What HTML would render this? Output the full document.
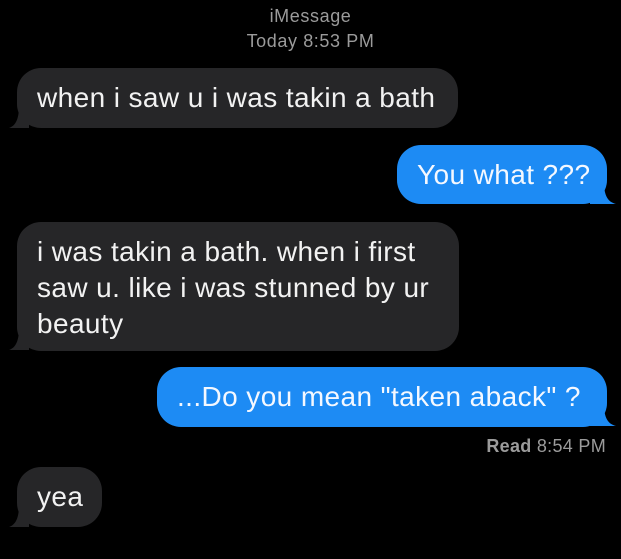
<!DOCTYPE html>
<html><head><style>
body{margin:0;width:621px;height:559px;background:#000;position:relative;overflow:hidden;font-family:"Liberation Sans",sans-serif;}
.h{position:absolute;left:0;width:621px;text-align:center;color:#9b9b9b;font-size:18px;letter-spacing:0.6px;}
.b{position:absolute;border-radius:24px;color:#f2f2f2;font-size:28px;letter-spacing:0.4px;line-height:36px;box-sizing:border-box;padding:12px 20px;white-space:nowrap;}
.g{background:#262628;}
.bl{background:#1d8bf4;color:#f4f8ff;}
svg{position:absolute;}
</style></head><body>
<div class="h" style="top:6px">iMessage</div>
<div class="h" style="top:31px">Today 8:53 PM</div>

<div class="b g" style="left:17px;top:68px;width:441px;height:60px;">when i saw u i was takin a bath</div>
<svg style="left:7px;top:106px" width="30" height="24"><path d="M22 0 L22 22 L2 22 C8 20 12 14 12 0 Z" fill="#262628"/></svg>

<div class="b bl" style="left:397px;top:145px;width:210px;height:59px;padding-left:20px;">You what ???</div>
<svg style="left:590px;top:182px" width="30" height="24"><path d="M0 0 L0 22 L26 22 C18 20 14 14 14 0 Z" fill="#1d8bf4"/></svg>

<div class="b g" style="left:17px;top:222px;width:442px;height:129px;padding-top:12px;line-height:36px;white-space:normal;">i was takin a bath. when i first<br>saw u. like i was stunned by ur<br>beauty</div>
<svg style="left:7px;top:328px" width="30" height="24"><path d="M22 0 L22 22 L2 22 C8 20 12 14 12 0 Z" fill="#262628"/></svg>

<div class="b bl" style="left:157px;top:367px;width:450px;height:60px;padding-left:20px;">...Do you mean "taken aback" ?</div>
<svg style="left:590px;top:404px" width="30" height="24"><path d="M0 0 L0 22 L26 22 C18 20 14 14 14 0 Z" fill="#1d8bf4"/></svg>

<div style="position:absolute;right:15px;top:436px;color:#9b9b9b;font-size:18px;letter-spacing:0.3px;"><b style="font-weight:bold">Read</b> 8:54 PM</div>

<div class="b g" style="left:17px;top:467px;width:85px;height:60px;">yea</div>
<svg style="left:7px;top:505px" width="30" height="24"><path d="M22 0 L22 22 L2 22 C8 20 12 14 12 0 Z" fill="#262628"/></svg>
</body></html>
